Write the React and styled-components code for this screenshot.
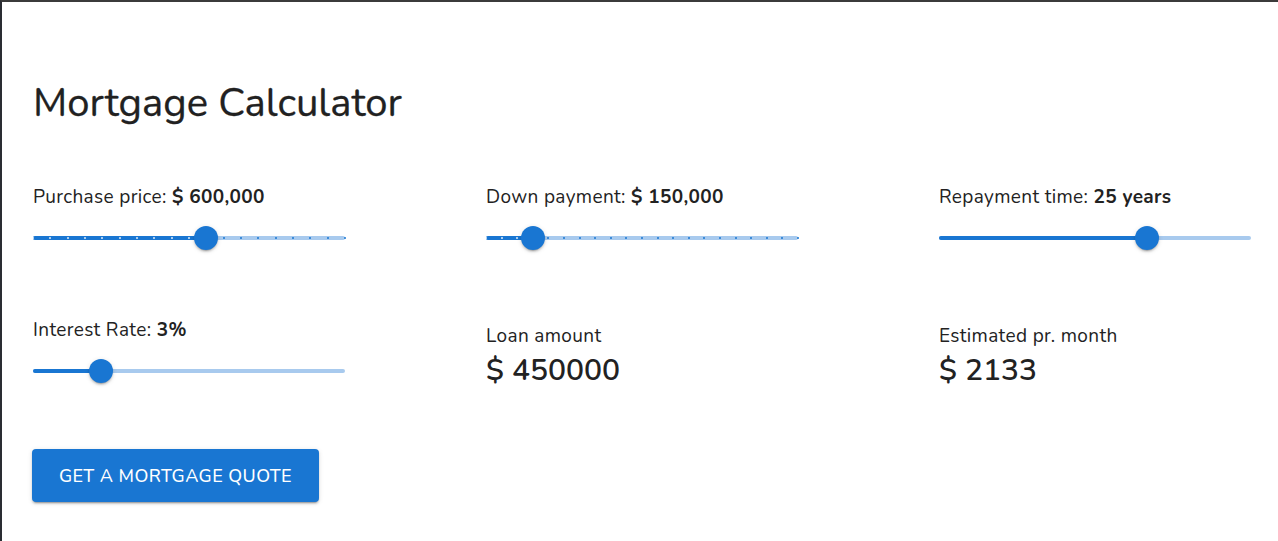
import React from "react";
import styled, { createGlobalStyle } from "styled-components";

const GlobalStyle = createGlobalStyle`
  html, body {
    margin: 0;
    padding: 0;
    background: #ffffff;
  }
  body {
    font-family: "Nunito", "Lato", "Open Sans", sans-serif;
    color: rgba(0, 0, 0, 0.87);
  }
`;

const Page = styled.div`
  box-sizing: border-box;
  width: 1278px;
  height: 541px;
  border-top: 2px solid #3b3b3b;
  border-left: 2px solid #2a2d33;
  padding: 77px 0 0 31px;
  overflow: hidden;
`;

const Title = styled.h1`
  margin: 0 0 57px;
  font-size: 40px;
  line-height: 48px;
  font-weight: 400;
  color: #212121;
  -webkit-text-stroke: 0.3px #212121;
`;

const Grid = styled.div`
  display: grid;
  grid-template-columns: repeat(3, 453px);
  row-gap: 64px;
`;

const Cell = styled.div`
  display: flex;
  flex-direction: column;
  padding-top: ${(p) => (p.$offset ? `${p.$offset}px` : "0")};
`;

const Label = styled.div`
  font-size: 19px;
  line-height: 27px;
  letter-spacing: 0.35px;
  margin-bottom: 12px;
  color: #222;

  b {
    font-weight: 700;
  }
`;

const OutLabel = styled.div`
  font-size: 19px;
  line-height: 27px;
  letter-spacing: 0.35px;
  color: #222;
`;

const OutValue = styled.div`
  font-size: 30px;
  line-height: 36px;
  margin-top: 3px;
  font-weight: 600;
  color: #222;
`;

const SliderRoot = styled.div`
  position: relative;
  width: 312px;
  height: 30px;
`;

const Rail = styled.div`
  position: absolute;
  left: 0;
  right: 0;
  top: 13px;
  height: 4px;
  border-radius: 2px;
  background: #a8caee;
`;

const Fill = styled.div`
  position: absolute;
  left: 0;
  top: 13px;
  height: 4px;
  border-radius: 2px;
  background: #1976d2;
`;

const Mark = styled.span`
  position: absolute;
  top: 14px;
  width: 2px;
  height: 2px;
  border-radius: 1px;
  margin-left: -1px;
  background: ${(p) => (p.$active ? "rgba(255,255,255,0.85)" : "#1976d2")};
`;

const Thumb = styled.span`
  position: absolute;
  top: 3px;
  width: 24px;
  height: 24px;
  margin-left: -12px;
  border-radius: 50%;
  background: #1976d2;
  box-shadow: 0 3px 1px -2px rgba(0, 0, 0, 0.2), 0 2px 2px 0 rgba(0, 0, 0, 0.14),
    0 1px 5px 0 rgba(0, 0, 0, 0.12);
`;

const Button = styled.button`
  align-self: flex-start;
  margin-top: 60px;
  margin-left: -1px;
  width: 287px;
  height: 53px;
  border: none;
  border-radius: 4px;
  background: #1976d2;
  color: #ffffff;
  font-family: inherit;
  font-size: 18px;
  font-weight: 500;
  letter-spacing: 0.45px;
  text-transform: uppercase;
  box-shadow: 0 3px 1px -2px rgba(0, 0, 0, 0.2), 0 2px 2px 0 rgba(0, 0, 0, 0.14),
    0 1px 5px 0 rgba(0, 0, 0, 0.12);
  cursor: pointer;
`;

const Slider = ({ value, steps }) => {
  const pos = value * 312;
  const marks = steps ? Array.from({ length: steps + 1 }, (_, i) => i / steps) : [];
  return (
    <SliderRoot>
      <Rail />
      <Fill style={{ width: pos }} />
      {marks.map((m) => (
        <Mark key={m} $active={m < value} style={{ left: m * 312 }} />
      ))}
      <Thumb style={{ left: pos }} />
    </SliderRoot>
  );
};

const App = () => {
  return (
    <Page>
      <GlobalStyle />
      <Title>Mortgage Calculator</Title>
      <Grid>
        <Cell>
          <Label>
            Purchase price: <b>$ 600,000</b>
          </Label>
          <Slider value={10 / 18} steps={18} />
        </Cell>
        <Cell>
          <Label>
            Down payment: <b>$ 150,000</b>
          </Label>
          <Slider value={3 / 20} steps={20} />
        </Cell>
        <Cell>
          <Label>
            Repayment time: <b>25 years</b>
          </Label>
          <Slider value={0.667} />
        </Cell>
        <Cell>
          <Label>
            Interest Rate: <b>3%</b>
          </Label>
          <Slider value={0.218} />
        </Cell>
        <Cell $offset={6}>
          <OutLabel>Loan amount</OutLabel>
          <OutValue>$ 450000</OutValue>
        </Cell>
        <Cell $offset={6}>
          <OutLabel>Estimated pr. month</OutLabel>
          <OutValue>$ 2133</OutValue>
        </Cell>
      </Grid>
      <Button>Get a mortgage quote</Button>
    </Page>
  );
};

export default App;
